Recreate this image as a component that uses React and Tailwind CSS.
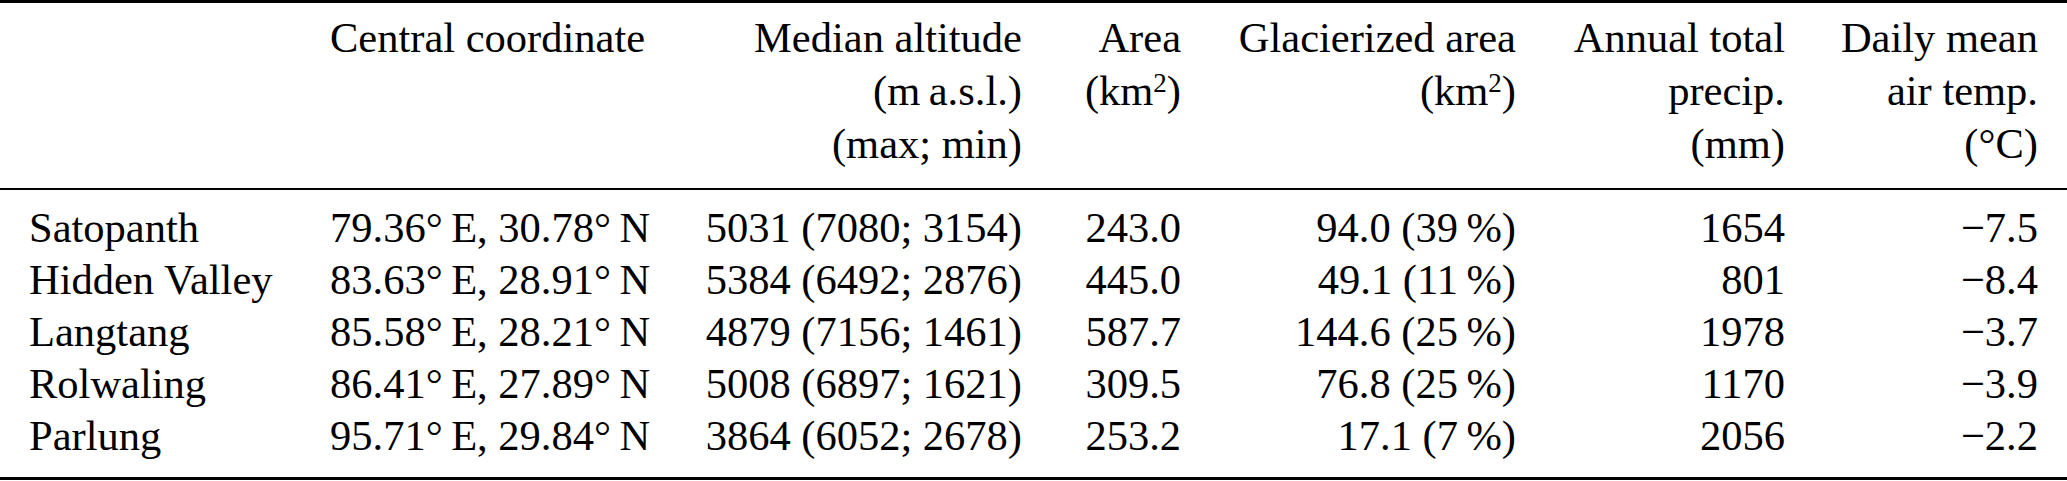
const rows = [
  ["Satopanth", "79.36°\u2009E, 30.78°\u2009N", "5031 (7080; 3154)", "243.0", "94.0 (39\u2009%)", "1654", "\u22127.5"],
  ["Hidden Valley", "83.63°\u2009E, 28.91°\u2009N", "5384 (6492; 2876)", "445.0", "49.1 (11\u2009%)", "801", "\u22128.4"],
  ["Langtang", "85.58°\u2009E, 28.21°\u2009N", "4879 (7156; 1461)", "587.7", "144.6 (25\u2009%)", "1978", "\u22123.7"],
  ["Rolwaling", "86.41°\u2009E, 27.89°\u2009N", "5008 (6897; 1621)", "309.5", "76.8 (25\u2009%)", "1170", "\u22123.9"],
  ["Parlung", "95.71°\u2009E, 29.84°\u2009N", "3864 (6052; 2678)", "253.2", "17.1 (7\u2009%)", "2056", "\u22122.2"],
];

const cols = "grid grid-cols-[330px_370px_322px_159px_335px_269px_253px] pr-[29px]";

const Km2 = () => (
  <>
    (km<sup className="text-[27px] relative -top-[13px]">2</sup>)
  </>
);

export default function App() {
  return (
    <div className="w-[2067px] h-[481px] bg-white text-black font-['Liberation_Serif','Times_New_Roman',serif] text-[42.5px]">
      <div className="border-t-[3px] border-black">
        <div className={`${cols} leading-[53px] pt-[8px] pb-[18px]`}>
          <div />
          <div className="whitespace-nowrap">Central coordinate</div>
          <div className="text-right whitespace-nowrap">
            Median altitude
            <br />
            (m{"\u2009"}a.s.l.)
            <br />
            (max; min)
          </div>
          <div className="text-right whitespace-nowrap">
            Area
            <br />
            <Km2 />
          </div>
          <div className="text-right whitespace-nowrap">
            Glacierized area
            <br />
            <Km2 />
          </div>
          <div className="text-right whitespace-nowrap">
            Annual total
            <br />
            precip.
            <br />
            (mm)
          </div>
          <div className="text-right whitespace-nowrap">
            Daily mean
            <br />
            air temp.
            <br />
            (°C)
          </div>
        </div>
      </div>
      <div className="border-t-2 border-black pt-[12px] pb-[15px] border-b-[3px]">
        {rows.map((r) => (
          <div key={r[0]} className={`${cols} leading-[52px] whitespace-nowrap`}>
            <div className="pl-[29px]">{r[0]}</div>
            <div>{r[1]}</div>
            {r.slice(2).map((c, i) => (
              <div key={i} className="text-right">
                {c}
              </div>
            ))}
          </div>
        ))}
      </div>
    </div>
  );
}
